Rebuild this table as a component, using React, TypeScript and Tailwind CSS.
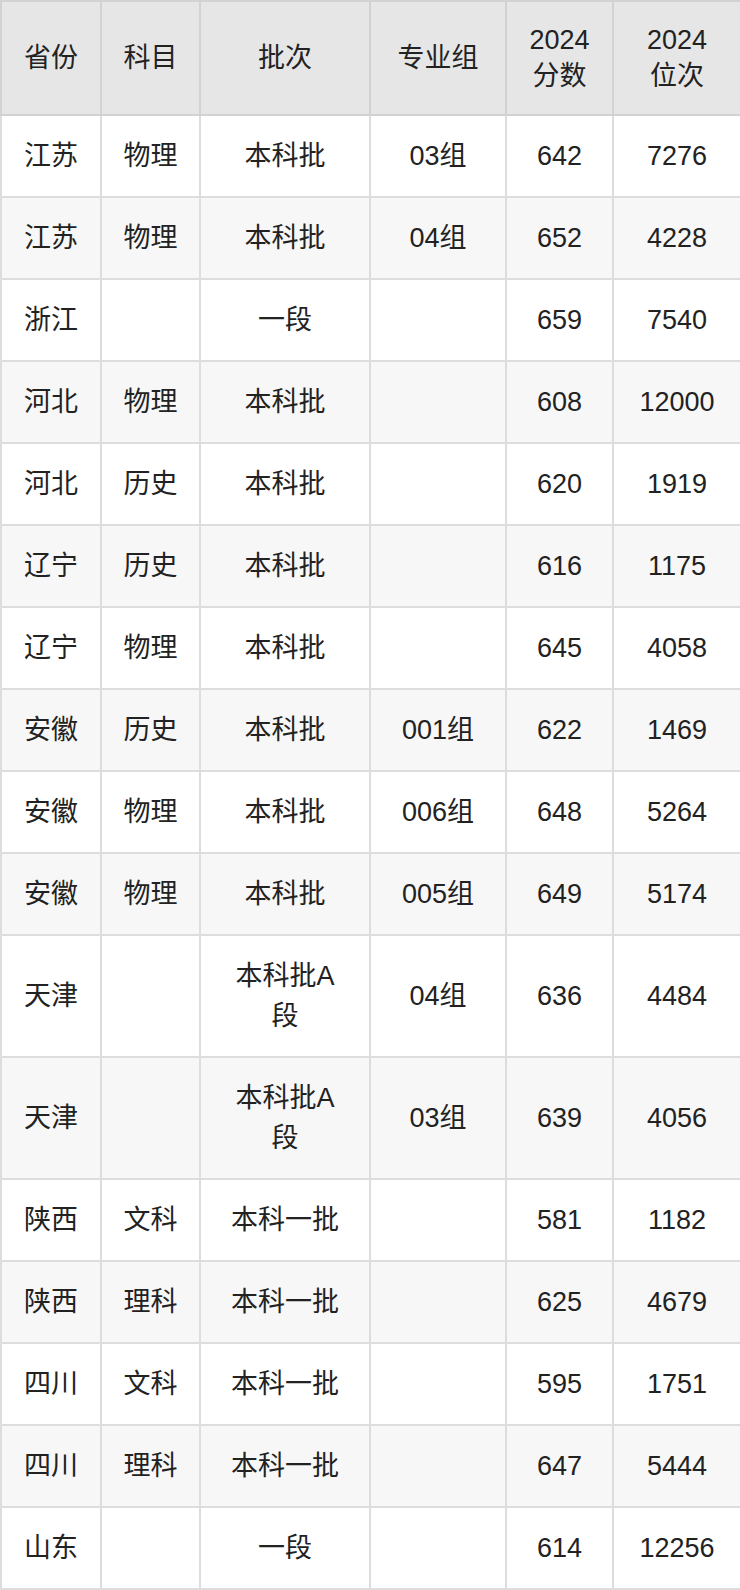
const rows: string[][] = [
  ['江苏', '物理', '本科批', '03组', '642', '7276'],
  ['江苏', '物理', '本科批', '04组', '652', '4228'],
  ['浙江', '', '一段', '', '659', '7540'],
  ['河北', '物理', '本科批', '', '608', '12000'],
  ['河北', '历史', '本科批', '', '620', '1919'],
  ['辽宁', '历史', '本科批', '', '616', '1175'],
  ['辽宁', '物理', '本科批', '', '645', '4058'],
  ['安徽', '历史', '本科批', '001组', '622', '1469'],
  ['安徽', '物理', '本科批', '006组', '648', '5264'],
  ['安徽', '物理', '本科批', '005组', '649', '5174'],
  ['天津', '', '本科批A段', '04组', '636', '4484'],
  ['天津', '', '本科批A段', '03组', '639', '4056'],
  ['陕西', '文科', '本科一批', '', '581', '1182'],
  ['陕西', '理科', '本科一批', '', '625', '4679'],
  ['四川', '文科', '本科一批', '', '595', '1751'],
  ['四川', '理科', '本科一批', '', '647', '5444'],
  ['山东', '', '一段', '', '614', '12256'],
];

const headers = ['省份', '科目', '批次', '专业组', '2024 分数', '2024 位次'];
const widths = ['w-[100px]', 'w-[99px]', 'w-[170px]', 'w-[136px]', 'w-[107px]', 'w-[128px]'];

export default function App() {
  return (
    <div className="w-[740px] bg-white">
      <table
        className="w-[741px] table-fixed border-collapse text-center text-[27px] text-[#222]"
        style={{ fontFamily: '"Liberation Sans", "Noto Sans CJK SC", sans-serif' }}
      >
        <colgroup>
          {widths.map((w, i) => (
            <col key={i} className={w} />
          ))}
        </colgroup>
        <thead>
          <tr className="bg-[#e6e6e6]">
            {headers.map((h, i) => (
              <th
                key={i}
                className="border-2 border-[#d2d2d2] px-[8px] py-[20px] font-normal leading-[36px]"
              >
                {h.includes(' ') ? (
                  <>
                    {h.split(' ')[0]}
                    <br />
                    {h.split(' ')[1]}
                  </>
                ) : (
                  h
                )}
              </th>
            ))}
          </tr>
        </thead>
        <tbody>
          {rows.map((r, i) => (
            <tr key={i} className={i % 2 === 0 ? 'bg-white' : 'bg-[#f7f7f7]'}>
              {r.map((c, j) => (
                <td
                  key={j}
                  className="border-2 border-[#dddddd] px-[8px] py-[20px] leading-[40px]"
                >
                  {c === '本科批A段' ? (
                    <>
                      本科批A
                      <br />段
                    </>
                  ) : (
                    c
                  )}
                </td>
              ))}
            </tr>
          ))}
        </tbody>
      </table>
    </div>
  );
}
